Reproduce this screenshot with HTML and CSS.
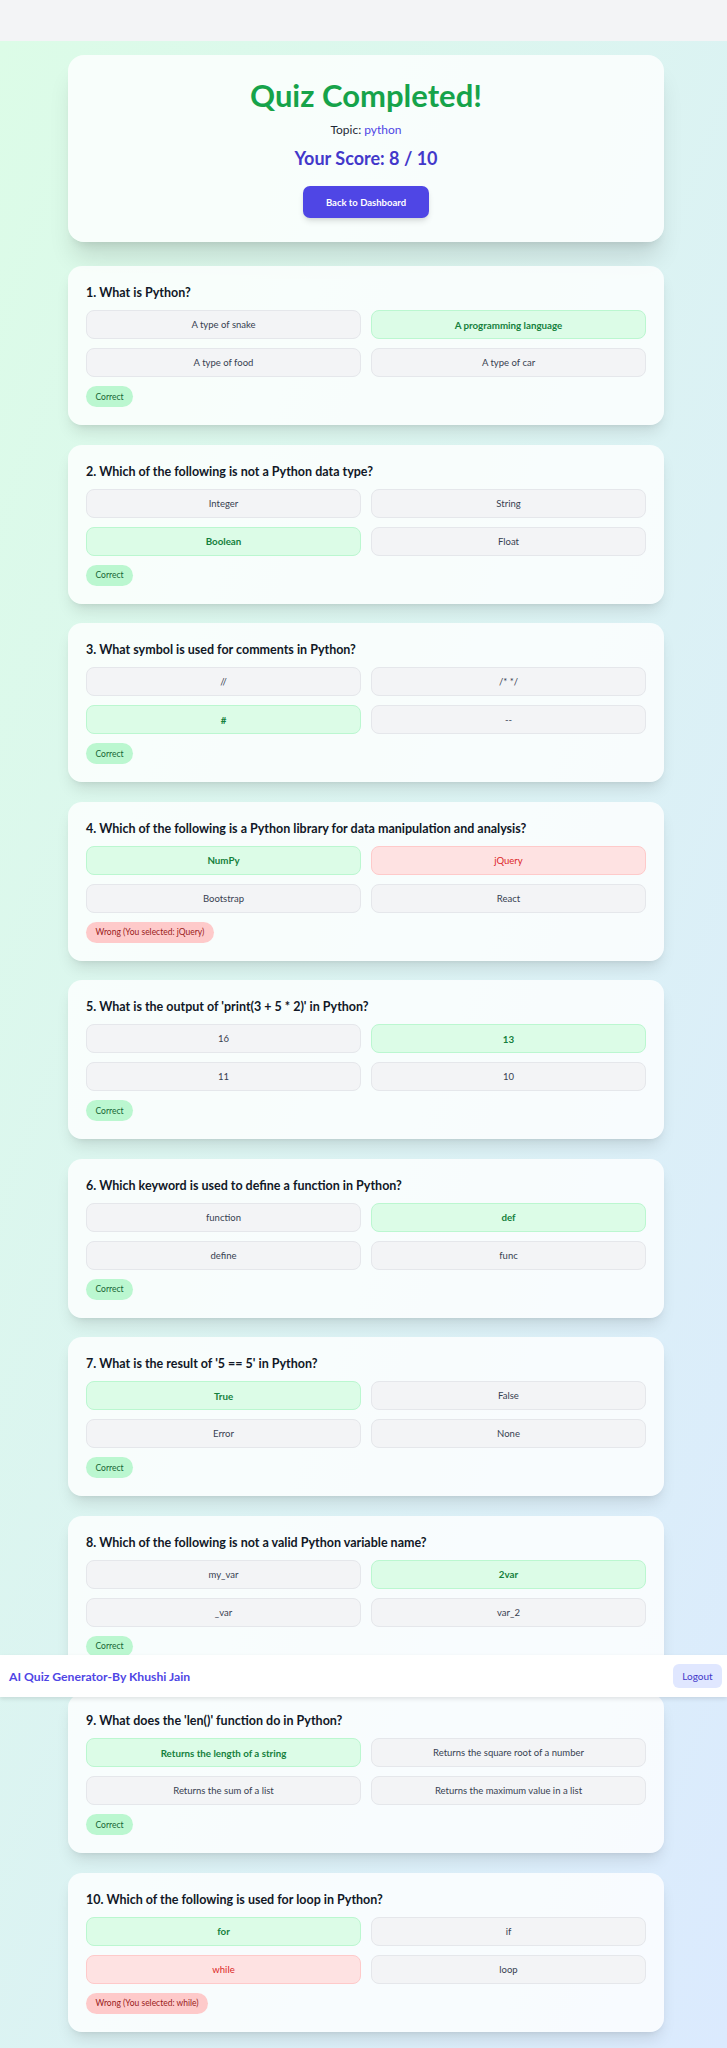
FILE: index.html
```html
<!DOCTYPE html>
<html lang="en">
<head>
<meta charset="utf-8">
<title>Quiz Result</title>
<link rel="stylesheet" href="styles.css">
</head>
<body>
<div class="top-space"></div>
<main class="page">
  <section class="summary">
    <h1 class="summary-title">Quiz Completed!</h1>
    <p class="topic">Topic: <span class="topic-name">python</span></p>
    <p class="score">Your Score: 8 / 10</p>
    <button class="back-btn">Back to Dashboard</button>
  </section>

  <div class="questions">
    <article class="q-card">
      <h2 class="q-title">1. What is Python?</h2>
      <div class="options">
        <div class="opt">A type of snake</div>
        <div class="opt opt-correct">A programming language</div>
        <div class="opt">A type of food</div>
        <div class="opt">A type of car</div>
      </div>
      <span class="badge badge-correct">Correct</span>
    </article>

    <article class="q-card">
      <h2 class="q-title">2. Which of the following is not a Python data type?</h2>
      <div class="options">
        <div class="opt">Integer</div>
        <div class="opt">String</div>
        <div class="opt opt-correct">Boolean</div>
        <div class="opt">Float</div>
      </div>
      <span class="badge badge-correct">Correct</span>
    </article>

    <article class="q-card">
      <h2 class="q-title">3. What symbol is used for comments in Python?</h2>
      <div class="options">
        <div class="opt">//</div>
        <div class="opt">/* */</div>
        <div class="opt opt-correct">#</div>
        <div class="opt">--</div>
      </div>
      <span class="badge badge-correct">Correct</span>
    </article>

    <article class="q-card">
      <h2 class="q-title">4. Which of the following is a Python library for data manipulation and analysis?</h2>
      <div class="options">
        <div class="opt opt-correct">NumPy</div>
        <div class="opt opt-wrong">jQuery</div>
        <div class="opt">Bootstrap</div>
        <div class="opt">React</div>
      </div>
      <span class="badge badge-wrong">Wrong (You selected: jQuery)</span>
    </article>

    <article class="q-card">
      <h2 class="q-title">5. What is the output of 'print(3 + 5 * 2)' in Python?</h2>
      <div class="options">
        <div class="opt">16</div>
        <div class="opt opt-correct">13</div>
        <div class="opt">11</div>
        <div class="opt">10</div>
      </div>
      <span class="badge badge-correct">Correct</span>
    </article>

    <article class="q-card">
      <h2 class="q-title">6. Which keyword is used to define a function in Python?</h2>
      <div class="options">
        <div class="opt">function</div>
        <div class="opt opt-correct">def</div>
        <div class="opt">define</div>
        <div class="opt">func</div>
      </div>
      <span class="badge badge-correct">Correct</span>
    </article>

    <article class="q-card">
      <h2 class="q-title">7. What is the result of '5 == 5' in Python?</h2>
      <div class="options">
        <div class="opt opt-correct">True</div>
        <div class="opt">False</div>
        <div class="opt">Error</div>
        <div class="opt">None</div>
      </div>
      <span class="badge badge-correct">Correct</span>
    </article>

    <article class="q-card">
      <h2 class="q-title">8. Which of the following is not a valid Python variable name?</h2>
      <div class="options">
        <div class="opt">my_var</div>
        <div class="opt opt-correct">2var</div>
        <div class="opt">_var</div>
        <div class="opt">var_2</div>
      </div>
      <span class="badge badge-correct">Correct</span>
    </article>

    <article class="q-card">
      <h2 class="q-title">9. What does the 'len()' function do in Python?</h2>
      <div class="options">
        <div class="opt opt-correct">Returns the length of a string</div>
        <div class="opt">Returns the square root of a number</div>
        <div class="opt">Returns the sum of a list</div>
        <div class="opt">Returns the maximum value in a list</div>
      </div>
      <span class="badge badge-correct">Correct</span>
    </article>

    <article class="q-card">
      <h2 class="q-title">10. Which of the following is used for loop in Python?</h2>
      <div class="options">
        <div class="opt opt-correct">for</div>
        <div class="opt">if</div>
        <div class="opt opt-wrong">while</div>
        <div class="opt">loop</div>
      </div>
      <span class="badge badge-wrong">Wrong (You selected: while)</span>
    </article>
  </div>
</main>

<nav class="navbar">
  <span class="brand">AI Quiz Generator-By Khushi Jain</span>
  <button class="logout">Logout</button>
</nav>
</body>
</html>
```

FILE: styles.css
```css
* {
  box-sizing: border-box;
}

html, body {
  margin: 0;
  padding: 0;
}

body {
  position: relative;
  background: #f3f4f6;
  font-family: Lato, "Noto Sans", Arial, sans-serif;
  color: #111827;
}

.top-space {
  height: 41px;
}

.page {
  background: linear-gradient(to bottom right, #dcfce7, #dbeafe);
  padding: 14px 63px 15px 68px;
  min-height: 2007px;
}

.summary {
  background: rgba(255, 255, 255, 0.8);
  border-radius: 16px;
  box-shadow: 0 20px 25px -5px rgba(0, 0, 0, 0.12), 0 8px 10px -6px rgba(0, 0, 0, 0.1);
  padding: 22px 20px 24px;
  display: flex;
  flex-direction: column;
  align-items: center;
  margin-bottom: 24px;
}

.summary-title {
  margin: 0;
  font-size: 31px;
  line-height: 36px;
  font-weight: 700;
  color: #16a34a;
}

.topic {
  margin: 7px 0 0;
  font-size: 12px;
  line-height: 20px;
  color: #1f2937;
}

.topic-name {
  color: #4f46e5;
}

.score {
  margin: 6px 0 0;
  font-size: 18px;
  line-height: 24px;
  font-weight: 700;
  color: #4338ca;
}

.back-btn {
  margin-top: 16px;
  height: 32px;
  width: 126px;
  border: none;
  border-radius: 7px;
  background: #4f46e5;
  color: #ffffff;
  font-family: inherit;
  font-size: 9.5px;
  font-weight: 700;
  box-shadow: 0 4px 6px -1px rgba(0, 0, 0, 0.12), 0 2px 4px -2px rgba(0, 0, 0, 0.1);
}

.questions {
  display: flex;
  flex-direction: column;
  gap: 19.5px;
}

.q-card {
  background: rgba(255, 255, 255, 0.8);
  border-radius: 14px;
  box-shadow: 0 10px 15px -3px rgba(0, 0, 0, 0.1), 0 4px 6px -4px rgba(0, 0, 0, 0.1);
  padding: 18px;
  display: flex;
  flex-direction: column;
  align-items: flex-start;
}

.q-title {
  margin: 0 0 8px;
  font-size: 12.5px;
  line-height: 18px;
  font-weight: 700;
  color: #111827;
}

.options {
  align-self: stretch;
  display: grid;
  grid-template-columns: 1fr 1fr;
  column-gap: 10px;
  row-gap: 9px;
}

.opt {
  height: 29px;
  display: flex;
  align-items: center;
  justify-content: center;
  border: 1px solid #e5e7eb;
  border-radius: 8px;
  background: #f3f4f6;
  font-size: 9.5px;
  color: #374151;
}

.opt-correct {
  background: #dcfce7;
  border-color: #bbf7d0;
  color: #15803d;
  font-size: 9.75px;
  font-weight: 700;
}

.opt-wrong {
  background: #fee2e2;
  border-color: #fecaca;
  color: #dc2626;
}

.badge {
  margin-top: 9px;
  height: 21px;
  display: inline-flex;
  align-items: center;
  padding: 0 9.5px;
  border-radius: 999px;
  font-size: 8.5px;
}

.badge-correct {
  background: #bbf7d0;
  color: #166534;
}

.badge-wrong {
  background: #fecaca;
  color: #991b1b;
}

.navbar {
  position: absolute;
  top: 1655px;
  left: 0;
  right: 0;
  height: 42px;
  background: #ffffff;
  box-shadow: 0 2px 4px rgba(0, 0, 0, 0.1);
  display: flex;
  align-items: center;
  justify-content: space-between;
  padding: 0 5px 0 9px;
}

.brand {
  font-size: 12.2px;
  font-weight: 700;
  color: #4f46e5;
}

.logout {
  height: 24px;
  width: 49px;
  border: none;
  border-radius: 6px;
  background: #e0e7ff;
  color: #4338ca;
  font-family: inherit;
  font-size: 10px;
  padding: 0;
}
```
